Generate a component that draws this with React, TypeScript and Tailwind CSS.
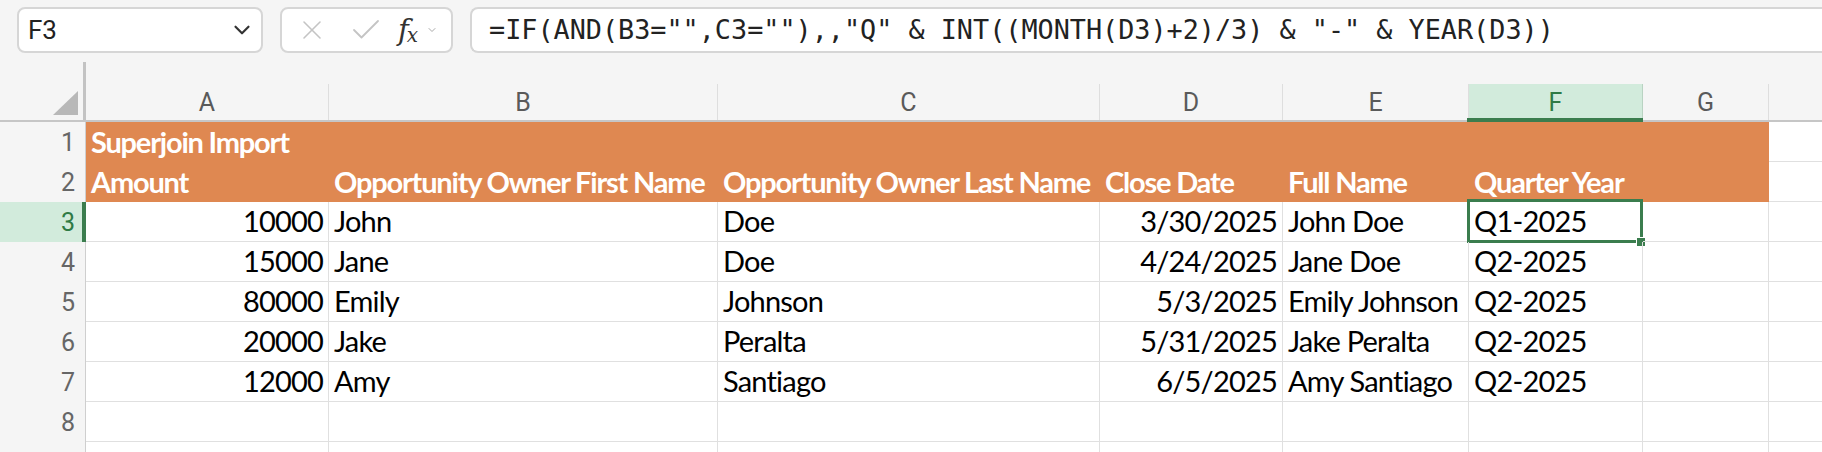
import { X, Check, ChevronDown } from "lucide-react";

type Col = { key: string; width: number };

const columns: Col[] = [
  { key: "A", width: 243 },
  { key: "B", width: 389 },
  { key: "C", width: 382 },
  { key: "D", width: 183 },
  { key: "E", width: 186 },
  { key: "F", width: 174 },
  { key: "G", width: 126 },
  { key: "H", width: 120 },
];

type Cell = { text?: string; align?: "left" | "right" };

const headerRows: Cell[][] = [
  [{ text: "Superjoin Import" }],
  [
    { text: "Amount" },
    { text: "Opportunity Owner First Name" },
    { text: "Opportunity Owner Last Name" },
    { text: "Close Date" },
    { text: "Full Name" },
    { text: "Quarter Year" },
  ],
];

const records = [
  ["10000", "John", "Doe", "3/30/2025", "John Doe", "Q1-2025"],
  ["15000", "Jane", "Doe", "4/24/2025", "Jane Doe", "Q2-2025"],
  ["80000", "Emily", "Johnson", "5/3/2025", "Emily Johnson", "Q2-2025"],
  ["20000", "Jake", "Peralta", "5/31/2025", "Jake Peralta", "Q2-2025"],
  ["12000", "Amy", "Santiago", "6/5/2025", "Amy Santiago", "Q2-2025"],
];

const cellFont = { fontFamily: "Lato, 'Open Sans', sans-serif" };
const uiFont = { fontFamily: "Roboto, Inter, sans-serif" };

function Toolbar() {
  return (
    <div className="flex h-[62px] items-start gap-[17px] bg-[#f5f5f5] pt-[7px] pl-[17px]">
      {/* name box */}
      <div className="flex h-[46px] w-[246px] shrink-0 items-center justify-between rounded-[8px] border-2 border-[#d6d6d6] bg-white pr-[6px] pl-[9px]">
        <span className="text-[26px] text-[#222]" style={uiFont}>
          F3
        </span>
        <ChevronDown className="h-[26px] w-[26px] text-[#333]" strokeWidth={2} />
      </div>

      {/* cancel / confirm / fx */}
      <div className="flex h-[46px] w-[173px] shrink-0 items-center rounded-[8px] border-2 border-[#d6d6d6] bg-white pl-[14px]">
        <X className="h-[32px] w-[32px] text-[#c4c4c4]" strokeWidth={1.2} />
        <Check className="ml-[20px] h-[36px] w-[36px] text-[#c4c4c4]" strokeWidth={1.2} />
        <span className="ml-[14px] flex items-end text-[#333]">
          <span
            className="text-[29px] italic leading-none"
            style={{ fontFamily: "'DejaVu Serif', serif" }}
          >
            f
          </span>
          <span
            className="-ml-[2px] text-[20px] italic leading-none"
            style={{ fontFamily: "'DejaVu Serif', serif" }}
          >
            x
          </span>
        </span>
        <ChevronDown className="ml-[8px] h-[12px] w-[12px] text-[#aaa]" strokeWidth={2} />
      </div>

      {/* formula bar */}
      <div className="flex h-[46px] flex-1 items-center rounded-l-[8px] border-y-2 border-l-2 border-[#d6d6d6] bg-white pl-[17px]">
        <span
          className="whitespace-pre text-[26.8px] text-[#222]"
          style={{ fontFamily: "'DejaVu Sans Mono', monospace" }}
        >
          {'=IF(AND(B3="",C3=""),,"Q" & INT((MONTH(D3)+2)/3) & "-" & YEAR(D3))'}
        </span>
      </div>
    </div>
  );
}

function ColumnHeaders() {
  return (
    <div className="flex h-[60px] border-b-2 border-[#c6c6c6] bg-[#f5f5f5]">
      <div className="relative h-full w-[86px] shrink-0 border-r-[3px] border-[#c3c3c3]">
        <svg className="absolute right-[5px] bottom-[5px]" width="25" height="24" viewBox="0 0 25 24">
          <polygon points="25,0 25,24 0,24" fill="#b8b8b8" />
        </svg>
      </div>
      {columns.map((c) => {
        const active = c.key === "F";
        return (
          <div
            key={c.key}
            className={`relative mt-[22px] flex h-[36px] shrink-0 items-center justify-center border-r ${
              active ? "border-[#b9d3c2] bg-[#d2ebdc] text-[#2f7a45]" : "border-[#dedede] text-[#5a5a5a]"
            }`}
            style={{ width: c.width }}
          >
            <span className="text-[25px] leading-none" style={uiFont}>
              {c.key === "H" ? "" : c.key}
            </span>
            {active && (
              <div className="absolute -right-[1px] -bottom-[2px] -left-[2px] h-[4px] bg-[#3b7d4e]" />
            )}
          </div>
        );
      })}
    </div>
  );
}

function RowHeader({ n, label }: { n: number; label: boolean }) {
  const active = n === 3;
  return (
    <div
      className={`relative flex h-full w-[86px] shrink-0 items-center justify-end border-r pr-[10px] ${
        active ? "border-[#3b7d4e] bg-[#d2ebdc] text-[#2f7a45]" : "border-[#cfcfcf] bg-[#f5f5f5] text-[#666]"
      }`}
    >
      {label && (
        <span className="text-[25px] leading-none" style={uiFont}>
          {n}
        </span>
      )}
      {active && <div className="absolute top-0 -right-[1px] h-full w-[4px] bg-[#3b7d4e]" />}
    </div>
  );
}

function Grid() {
  const rows: { cells: Cell[]; filled: boolean }[] = [
    ...headerRows.map((r) => ({ cells: r, filled: true })),
    ...records.map((r) => ({
      cells: r.map((t, i) => ({ text: t, align: (i === 0 || i === 3 ? "right" : "left") as "left" | "right" })),
      filled: false,
    })),
    { cells: [], filled: false },
    { cells: [], filled: false },
  ];

  return (
    <div className="bg-white">
      {rows.map((row, ri) => {
        const n = ri + 1;
        return (
          <div key={n} className="flex h-[40px]">
            {/* last row only peeks in at the bottom edge, so no number */}
            <RowHeader n={n} label={n < rows.length} />
            {columns.map((c, ci) => {
              const cell = row.cells[ci];
              const orange = row.filled && ci < 7;
              const selected = n === 3 && c.key === "F";
              return (
                <div
                  key={c.key}
                  className={`relative flex h-full shrink-0 items-end whitespace-nowrap px-[5px] pb-[2px] ${
                    orange
                      ? "bg-[#df8851] font-bold tracking-[-1.2px] text-white"
                      : "border-r border-b border-[#e0e0e0] tracking-[-0.8px] text-black"
                  } ${cell?.align === "right" ? "justify-end" : "justify-start"}`}
                  style={{ width: c.width }}
                >
                  <span className="text-[29px] leading-[36px]" style={cellFont}>
                    {cell?.text}
                  </span>
                  {selected && (
                    <>
                      <div className="pointer-events-none absolute -top-[3px] -left-[2px] h-[44px] w-[176px] border-[3px] border-[#3b7d4e]" />
                      <div className="absolute top-[35px] left-[167px] h-[10px] w-[10px] border border-white bg-[#3b7d4e]" />
                    </>
                  )}
                </div>
              );
            })}
          </div>
        );
      })}
    </div>
  );
}

export default function App() {
  return (
    <div className="h-[452px] w-[1822px] overflow-hidden bg-[#f5f5f5]">
      <Toolbar />
      <ColumnHeaders />
      <Grid />
    </div>
  );
}
